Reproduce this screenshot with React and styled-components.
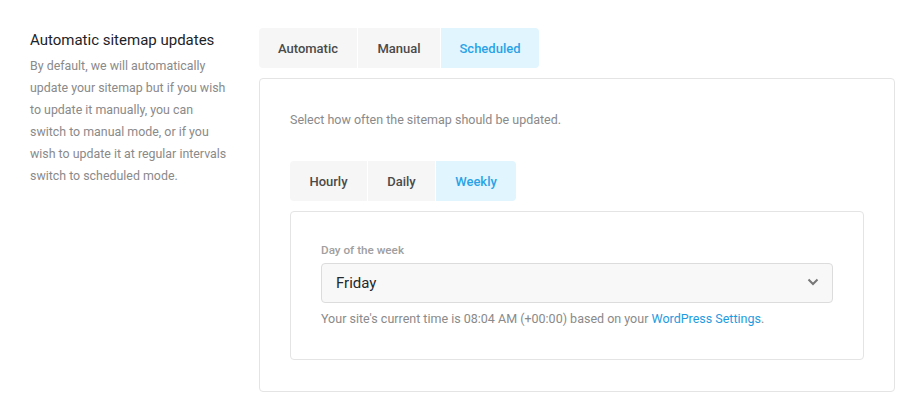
import React, { useState } from 'react';
import styled, { createGlobalStyle } from 'styled-components';

const GlobalStyle = createGlobalStyle`
  body {
    margin: 0;
    background: #fff;
    font-family: Roboto, "Noto Sans", Arial, sans-serif;
  }
`;

const Page = styled.div`
  display: flex;
  padding: 28px 27px 26px 30px;
  gap: 29px;
`;

const Intro = styled.div`
  width: 200px;
  flex-shrink: 0;
  padding-top: 2px;
`;

const Title = styled.h3`
  margin: 0 0 5px;
  font-size: 15px;
  font-weight: 400;
  line-height: 20px;
  color: #1d2327;
`;

const Description = styled.p`
  margin: 0;
  font-size: 12.4px;
  line-height: 22px;
  color: #8a8a8a;
`;

const Main = styled.div`
  flex: 1;
  display: flex;
  flex-direction: column;
  gap: 10px;
`;

const TabGroup = styled.div`
  display: flex;
  align-self: flex-start;
  gap: 1px;
  border-radius: 4px;
  overflow: hidden;
`;

const Tab = styled.button`
  border: 0;
  height: 40px;
  width: ${(p) => p.$width}px;
  padding: 0;
  font-family: inherit;
  font-size: 13px;
  font-weight: 500;
  cursor: pointer;
  background: ${(p) => (p.$active ? '#e1f5fe' : '#f6f6f6')};
  color: ${(p) => (p.$active ? '#29a3e6' : '#4a4a4a')};
`;

const Panel = styled.div`
  border: 1px solid #e4e4e4;
  border-radius: 4px;
  padding: ${(p) => p.$pad};
  display: flex;
  flex-direction: column;
  gap: 10px;
`;

const Hint = styled.p`
  margin: 2px 0 21px;
  font-size: 12.5px;
  line-height: 20px;
  color: #8a8a8a;
`;

const Label = styled.label`
  display: block;
  font-size: 11.7px;
  font-weight: 500;
  color: #a0a0a0;
  line-height: 16px;
  margin-bottom: 5px;
`;

const SelectBox = styled.div`
  position: relative;
  width: 512px;
`;

const Select = styled.select`
  appearance: none;
  width: 100%;
  height: 40px;
  padding: 0 40px 0 14px;
  border: 1px solid #dcdcdc;
  border-radius: 4px;
  background: #f8f8f8;
  font-family: inherit;
  font-size: 15px;
  color: #23282d;
  outline: none;
`;

const Chevron = styled.svg`
  position: absolute;
  right: 14px;
  top: 15px;
  pointer-events: none;
`;

const Help = styled.p`
  margin: 6px 0 0;
  font-size: 12.5px;
  line-height: 20px;
  color: #8a8a8a;
`;

const Link = styled.a`
  color: #1e9be0;
  text-decoration: none;
`;

const modes = [
  { key: 'automatic', label: 'Automatic', width: 98 },
  { key: 'manual', label: 'Manual', width: 82 },
  { key: 'scheduled', label: 'Scheduled', width: 98 },
];

const freqs = [
  { key: 'hourly', label: 'Hourly', width: 77 },
  { key: 'daily', label: 'Daily', width: 67 },
  { key: 'weekly', label: 'Weekly', width: 80 },
];

const days = ['Monday', 'Tuesday', 'Wednesday', 'Thursday', 'Friday', 'Saturday', 'Sunday'];

const App = () => {
  const [mode, setMode] = useState('scheduled');
  const [freq, setFreq] = useState('weekly');
  const [day, setDay] = useState('Friday');

  return (
    <>
      <GlobalStyle />
      <Page>
        <Intro>
          <Title>Automatic sitemap updates</Title>
          <Description>
            By default, we will automatically update your sitemap but if you wish to update it
            manually, you can switch to manual mode, or if you wish to update it at regular
            intervals switch to scheduled mode.
          </Description>
        </Intro>
        <Main>
          <TabGroup>
            {modes.map((m) => (
              <Tab key={m.key} $width={m.width} $active={mode === m.key} onClick={() => setMode(m.key)}>
                {m.label}
              </Tab>
            ))}
          </TabGroup>
          <Panel $pad="29px 30px 31px">
            <Hint>Select how often the sitemap should be updated.</Hint>
            <TabGroup>
              {freqs.map((f) => (
                <Tab key={f.key} $width={f.width} $active={freq === f.key} onClick={() => setFreq(f.key)}>
                  {f.label}
                </Tab>
              ))}
            </TabGroup>
            <Panel $pad="30px 30px 30px">
              <div>
                <Label>Day of the week</Label>
                <SelectBox>
                  <Select value={day} onChange={(e) => setDay(e.target.value)}>
                    {days.map((d) => (
                      <option key={d}>{d}</option>
                    ))}
                  </Select>
                  <Chevron width="12" height="8" viewBox="0 0 12 8">
                    <path d="M1.5 1.5 L6 6 L10.5 1.5" fill="none" stroke="#777" strokeWidth="2" />
                  </Chevron>
                </SelectBox>
                <Help>
                  Your site's current time is 08:04 AM (+00:00) based on your{' '}
                  <Link href="#">WordPress Settings</Link>.
                </Help>
              </div>
            </Panel>
          </Panel>
        </Main>
      </Page>
    </>
  );
};

export default App;
